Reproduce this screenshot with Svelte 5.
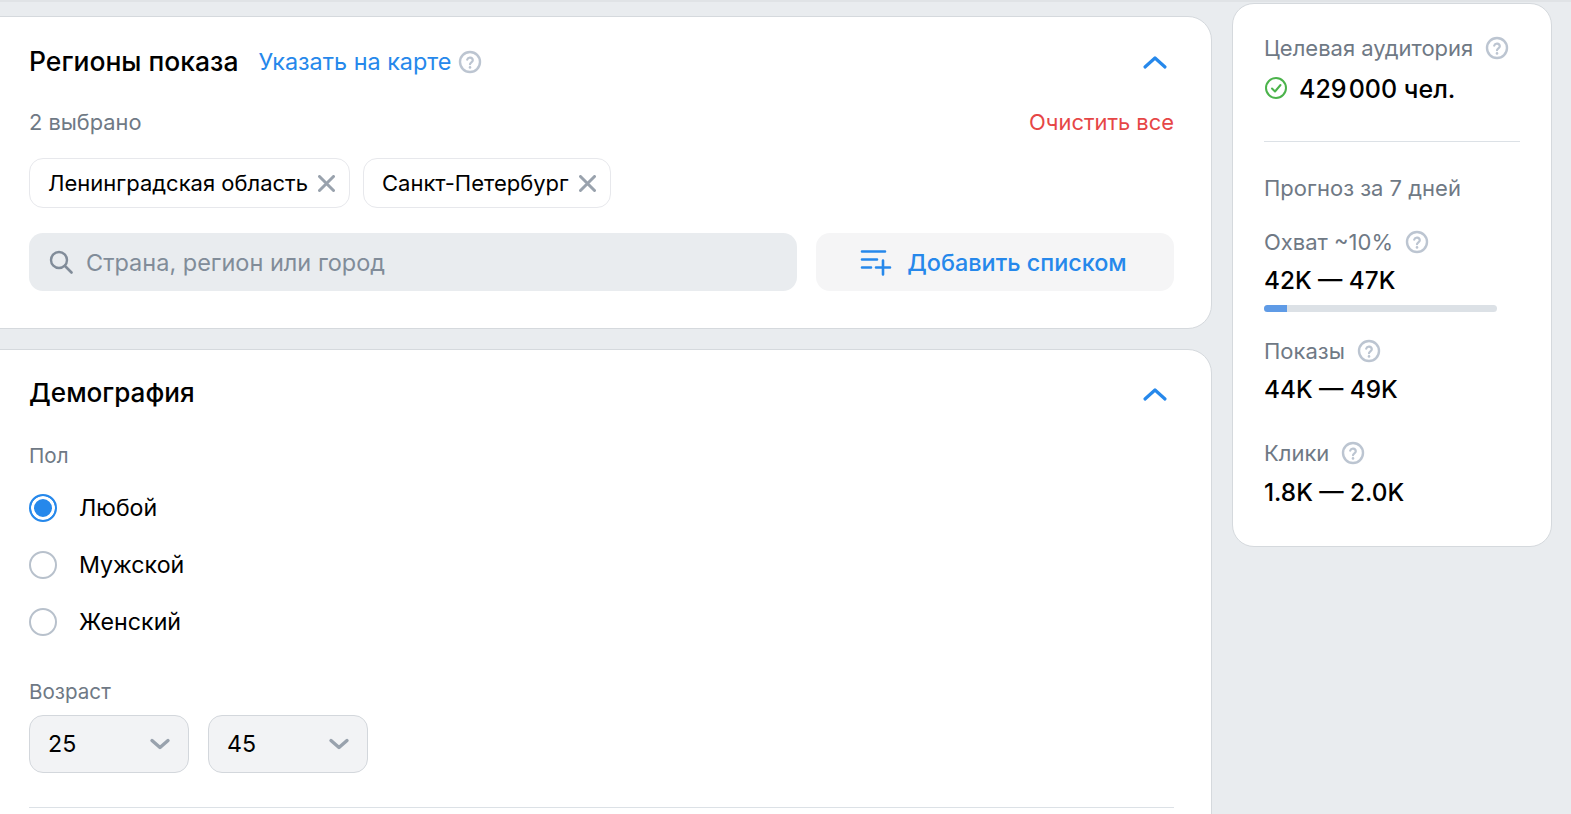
<script>
    const selected = ['Ленинградская область', 'Санкт-Петербург'];
    const genders = [
        { label: 'Любой', checked: true },
        { label: 'Мужской', checked: false },
        { label: 'Женский', checked: false }
    ];
    const ages = ['25', '45'];
</script>

{#snippet help()}
    <svg class="help" viewBox="0 0 24 24" width="24" height="24" fill="none">
        <circle cx="12" cy="12" r="10" stroke="#bcc5d1" stroke-width="2.4" />
        <path d="M9.2 9.6a2.9 2.9 0 0 1 5.6.6c0 1.9-2.8 2.2-2.8 4" stroke="#bcc5d1" stroke-width="2.2" stroke-linecap="round" />
        <circle cx="12" cy="17.4" r="1.3" fill="#bcc5d1" />
    </svg>
{/snippet}

{#snippet chevron()}
    <svg class="chevron" viewBox="0 0 26 16" width="26" height="16" fill="none">
        <path d="M3 13 13 4l10 9" stroke="#2688eb" stroke-width="3.2" stroke-linecap="round" stroke-linejoin="round" />
    </svg>
{/snippet}

<div class="page">
    <main class="left">
        <section class="card regions">
            <header class="head">
                <h2>Регионы показа</h2>
                <a class="map-link">Указать на карте</a>
                {@render help()}
                <span class="spacer"></span>
                {@render chevron()}
            </header>

            <div class="count-row">
                <span>2 выбрано</span>
                <a class="clear">Очистить все</a>
            </div>

            <div class="chips">
                {#each selected as name}
                    <div class="chip">
                        <span>{name}</span>
                        <svg viewBox="0 0 17 17" width="17" height="17" fill="none">
                            <path d="M1.500 1.500l14 14M15.500 1.500l-14 14" stroke="#99a2ad" stroke-width="3" stroke-linecap="round" />
                        </svg>
                    </div>
                {/each}
            </div>

            <div class="search-row">
                <div class="search">
                    <svg viewBox="0 0 24 24" width="24" height="24" fill="none">
                        <circle cx="10" cy="10" r="8" stroke="#818c99" stroke-width="2.4" />
                        <path d="m16 16 6.500 6.500" stroke="#818c99" stroke-width="2.600" stroke-linecap="round" />
                    </svg>
                    <span>Страна, регион или город</span>
                </div>
                <button class="add">
                    <svg viewBox="0 0 32 28" width="32" height="28" fill="none">
                        <path d="M2 3.500h23M2 11.500h15M2 19.500h9M23 12.500v14M16 19.500h14" stroke="#2688eb" stroke-width="2.600" stroke-linecap="round" />
                    </svg>
                    Добавить списком
                </button>
            </div>
        </section>

        <section class="card demo">
            <header class="head">
                <h2>Демография</h2>
                <span class="spacer"></span>
                {@render chevron()}
            </header>

            <div class="label">Пол</div>
            <div class="radios">
                {#each genders as g}
                    <div class="radio">
                        <span class="dot" class:on={g.checked}></span>
                        {g.label}
                    </div>
                {/each}
            </div>

            <div class="label age-label">Возраст</div>
            <div class="ages">
                {#each ages as age}
                    <div class="select">
                        <span>{age}</span>
                        <svg viewBox="0 0 22 12" width="22" height="12" fill="none">
                            <path d="M3 2.500l8 7 8-7" stroke="#99a2ad" stroke-width="3.400" stroke-linecap="round" stroke-linejoin="round" />
                        </svg>
                    </div>
                {/each}
            </div>
            <div class="rule"></div>
        </section>
    </main>

    <aside class="card side">
        <div class="stat-label">Целевая аудитория {@render help()}</div>
        <div class="audience">
            <svg viewBox="0 0 24 24" width="24" height="24" fill="none">
                <circle cx="12" cy="12" r="10" stroke="#4bb34b" stroke-width="2" />
                <path d="m8 12.500 3 3 5.500-6.500" stroke="#4bb34b" stroke-width="2" stroke-linecap="round" stroke-linejoin="round" />
            </svg>
            <span>429&#8202;000 чел.</span>
        </div>
        <div class="divider"></div>
        <div class="forecast">Прогноз за 7 дней</div>

        <div class="stat-label reach">Охват ~10% {@render help()}</div>
        <div class="value">42K — 47K</div>
        <div class="bar"><div class="fill" style="width: 10%"></div></div>

        <div class="stat-label shows">Показы {@render help()}</div>
        <div class="value">44K — 49K</div>

        <div class="stat-label clicks">Клики {@render help()}</div>
        <div class="value">1.8K — 2.0K</div>
    </aside>
</div>

<style>
    :global(body) {
        background: #e9ecef;
        font-family: Inter, "Noto Sans", sans-serif;
        color: #000;
        overflow: hidden;
    }
    .page {
        height: 814px;
        overflow: hidden;
        display: flex;
        align-items: flex-start;
        gap: 20px;
        margin-left: -30px;
        padding-top: 1px;
        border-top: 2px solid #e0e3e6;
        box-sizing: border-box;
    }
    .left {
        width: 1242px;
        flex: none;
        display: flex;
        flex-direction: column;
        gap: 20px;
        padding-top: 13px;
    }
    .card {
        background: #fff;
        border: 1px solid #d5d9dd;
        border-radius: 24px;
        box-sizing: border-box;
    }
    .regions {
        height: 313px;
        padding: 0 37px 0 58px;
    }
    .demo {
        height: 520px;
        padding: 0 37px 0 58px;
    }
    .head {
        height: 90px;
        display: flex;
        align-items: center;
    }
    .demo .head {
        height: 88px;
    }
    h2 {
        margin: 0 0 3px;
        font-size: 26.5px;
        font-weight: 500;
    }
    .demo h2 {
        font-size: 26.1px;
    }
    .map-link {
        margin: 0 7px 2px 20px;
        font-size: 23.4px;
        color: #2688eb;
    }
    .spacer {
        flex: 1;
    }
    .chevron {
        margin-right: 6px;
    }
    .help {
        flex: none;
    }
    .count-row {
        display: flex;
        justify-content: space-between;
        align-items: center;
        font-size: 21.8px;
        color: #6f7985;
        margin-top: 2px;
    }
    .clear {
        font-size: 21.9px;
        color: #e64646;
    }
    .chips {
        display: flex;
        gap: 13px;
        margin-top: 23px;
    }
    .chip {
        height: 50px;
        display: flex;
        align-items: center;
        gap: 10px;
        padding: 0 14px 0 18px;
        border: 1px solid #e7e8ec;
        border-radius: 14px;
        font-size: 22px;
        box-sizing: border-box;
    }
    .search-row {
        display: flex;
        gap: 19px;
        margin-top: 25px;
    }
    .search {
        flex: 1;
        height: 58px;
        display: flex;
        align-items: center;
        gap: 13px;
        padding-left: 20px;
        background: #e9ecef;
        border-radius: 14px;
        font-size: 23.5px;
        color: #818c99;
    }
    .add {
        width: 358px;
        height: 58px;
        display: flex;
        align-items: center;
        justify-content: center;
        gap: 15px;
        border: 0;
        padding: 0 3px 0 0;
        background: #f5f5f6;
        border-radius: 14px;
        font: inherit;
        font-size: 23.4px;
        font-weight: 500;
        color: #2688eb;
    }
    .label {
        font-size: 20.6px;
        color: #6f7985;
        margin-top: 5px;
    }
    .radios {
        display: flex;
        flex-direction: column;
        gap: 29px;
        margin-top: 26px;
    }
    .radio {
        height: 28px;
        display: flex;
        align-items: center;
        gap: 22px;
        font-size: 23.2px;
    }
    .dot {
        width: 28px;
        height: 28px;
        box-sizing: border-box;
        border: 2px solid #b8c1cc;
        border-radius: 50%;
    }
    .dot.on {
        border-color: #2688eb;
        background: #2688eb;
        box-shadow: inset 0 0 0 3px #fff;
    }
    .age-label {
        margin-top: 43px;
    }
    .ages {
        display: flex;
        gap: 19px;
        margin-top: 11px;
    }
    .select {
        width: 160px;
        height: 58px;
        display: flex;
        align-items: center;
        justify-content: space-between;
        padding: 0 17px 0 18px;
        background: #f2f3f5;
        border: 1px solid #d3d7dc;
        border-radius: 14px;
        font-size: 23.2px;
        box-sizing: border-box;
    }
    .rule {
        height: 1px;
        background: #dce1e6;
        margin-top: 34px;
    }
    .side {
        width: 320px;
        height: 544px;
        flex: none;
        padding: 0 31px;
        border-radius: 22px;
    }
    .stat-label {
        display: flex;
        align-items: center;
        gap: 12px;
        font-size: 22px;
        color: #6f7985;
        height: 28px;
    }
    .side > .stat-label:first-child {
        margin-top: 30px;
    }
    .audience {
        display: flex;
        align-items: center;
        gap: 11px;
        margin-top: 12px;
        font-size: 25px;
        font-weight: 500;
    }
    .audience svg {
        margin-top: -3px;
    }
    .divider {
        height: 1px;
        background: #dce1e6;
        margin-top: 37px;
    }
    .forecast {
        font-size: 22px;
        color: #6f7985;
        margin-top: 33px;
    }
    .reach {
        margin-top: 27px;
    }
    .shows {
        margin-top: 25px;
    }
    .clicks {
        margin-top: 35px;
    }
    .clicks + .value {
        margin-top: 10px;
    }
    .value {
        margin-top: 9px;
        font-size: 24.3px;
        font-weight: 500;
    }
    .bar {
        width: 233px;
        height: 7px;
        margin-top: 10px;
        background: #dce1e6;
        border-radius: 4px;
        overflow: hidden;
    }
    .fill {
        height: 100%;
        background: #5f9be6;
    }
</style>
